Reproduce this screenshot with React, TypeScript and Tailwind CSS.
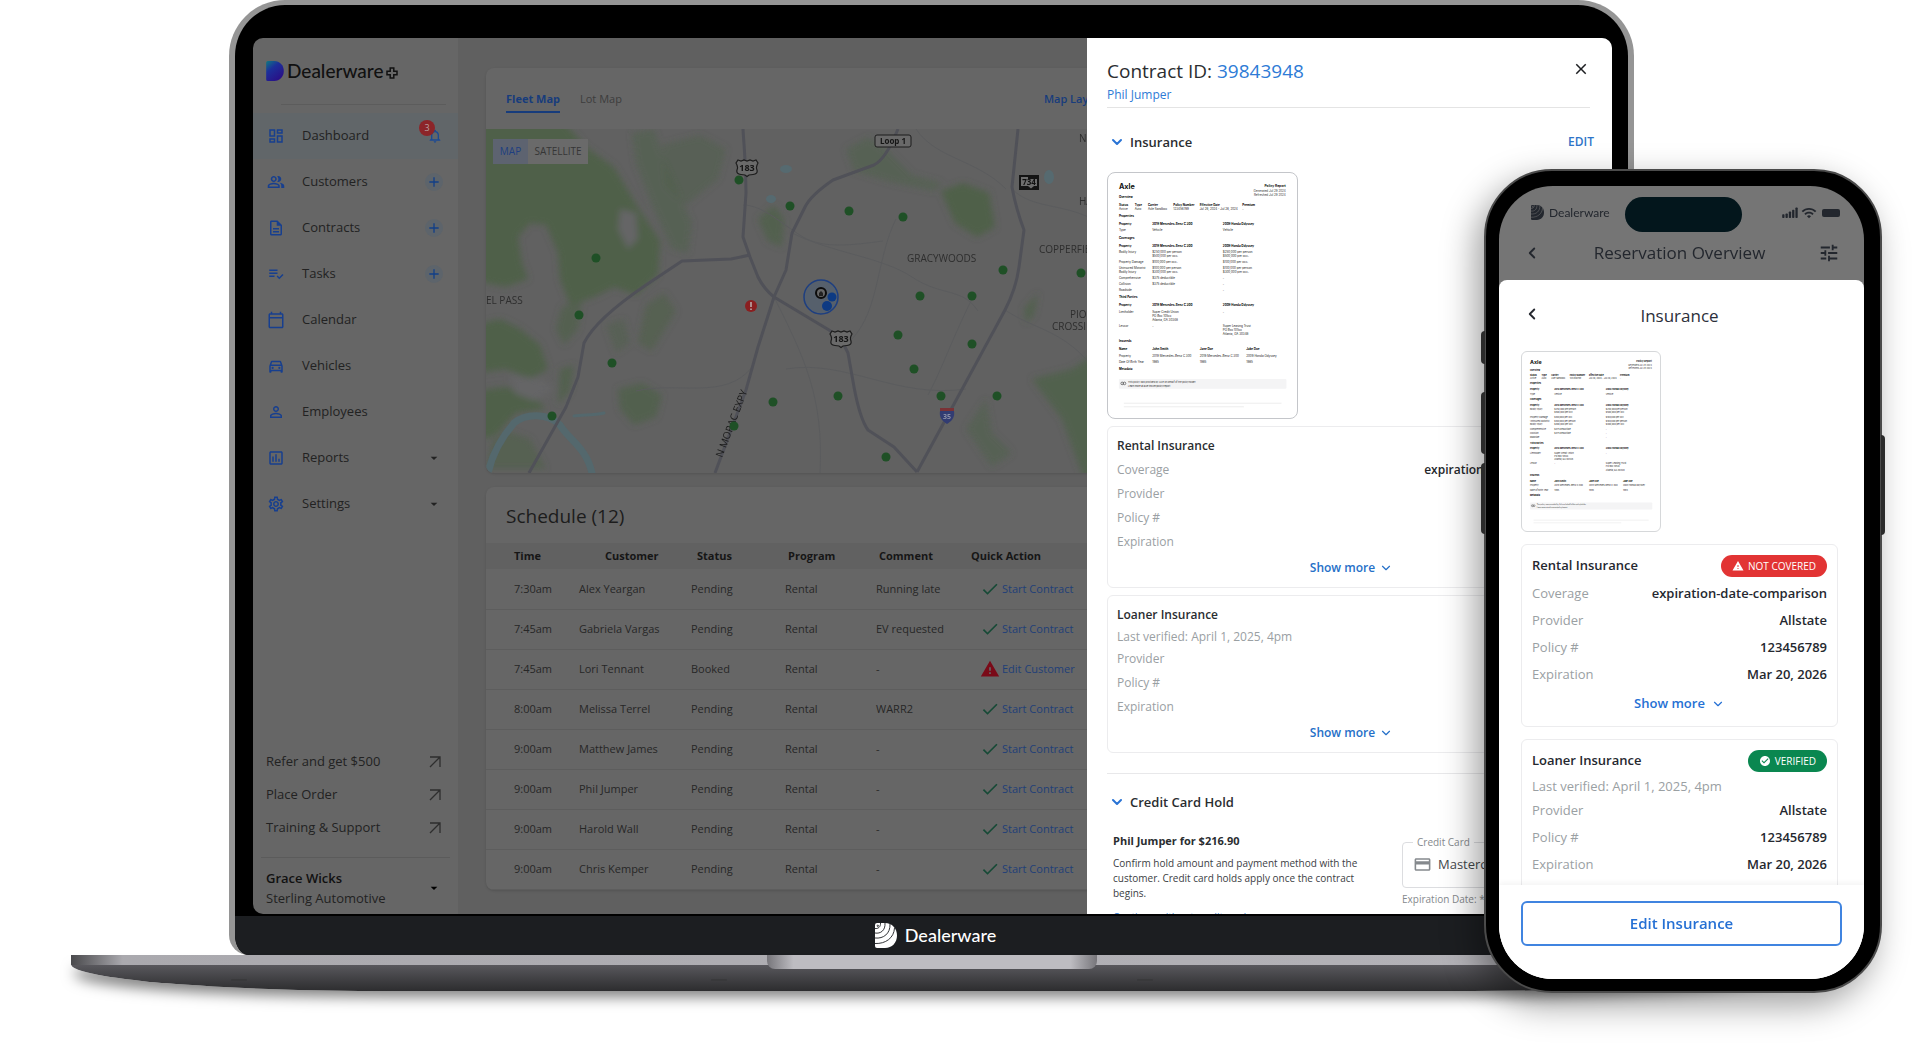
import type { ReactNode } from 'react';
import { ChevronDown, ChevronLeft } from 'lucide-react';
import {
    MdAdd,
    MdArrowDropDown,
    MdCheck,
    MdCheckCircle,
    MdClose,
    MdOutlineAssessment,
    MdOutlineCalendarToday,
    MdOutlineCreditCard,
    MdOutlineDashboard,
    MdOutlineDescription,
    MdOutlineDirectionsCar,
    MdOutlineNotifications,
    MdOutlinePeopleAlt,
    MdOutlineSettings,
    MdPersonOutline,
    MdPlaylistAddCheck,
    MdTune,
    MdWarning,
    MdWifi,
} from 'react-icons/md';

const navItems = [
    { label: 'Dashboard', icon: MdOutlineDashboard, action: 'bell' },
    { label: 'Customers', icon: MdOutlinePeopleAlt, action: 'add' },
    { label: 'Contracts', icon: MdOutlineDescription, action: 'add' },
    { label: 'Tasks', icon: MdPlaylistAddCheck, action: 'add' },
    { label: 'Calendar', icon: MdOutlineCalendarToday, action: '' },
    { label: 'Vehicles', icon: MdOutlineDirectionsCar, action: '' },
    { label: 'Employees', icon: MdPersonOutline, action: '' },
    { label: 'Reports', icon: MdOutlineAssessment, action: 'expand' },
    { label: 'Settings', icon: MdOutlineSettings, action: 'expand' },
];

const schedule = [
    { time: '7:30am', customer: 'Alex Yeargan', status: 'Pending', comment: 'Running late' },
    { time: '7:45am', customer: 'Gabriela Vargas', status: 'Pending', comment: 'EV requested' },
    { time: '7:45am', customer: 'Lori Tennant', status: 'Booked', comment: '-' },
    { time: '8:00am', customer: 'Melissa Terrel', status: 'Pending', comment: 'WARR2' },
    { time: '9:00am', customer: 'Matthew James', status: 'Pending', comment: '-' },
    { time: '9:00am', customer: 'Phil Jumper', status: 'Pending', comment: '-' },
    { time: '9:00am', customer: 'Harold Wall', status: 'Pending', comment: '-' },
    { time: '9:00am', customer: 'Chris Kemper', status: 'Pending', comment: '-' },
];

const vehiclePins = [
    [253, 51], [304, 77], [363, 82], [417, 88], [110, 129], [517, 141], [595, 144],
    [434, 167], [486, 167], [93, 186], [412, 206], [486, 215], [126, 234], [428, 240],
    [287, 273], [352, 267], [455, 267], [511, 267], [66, 287], [248, 297], [400, 328],
];

// x, baseline, text, bold
const reportLines: [number, number, string, boolean][] = [
    [33, 76, 'Overview', true],
    [33, 99, 'Status', true], [81, 99, 'Type', true], [121, 99, 'Carrier', true],
    [198, 99, 'Policy Number', true], [278, 99, 'Effective Date', true], [407, 99, 'Premium', true],
    [33, 111, 'Active', false], [81, 111, 'Auto', false], [121, 111, 'Axle Sandbox', false],
    [198, 111, '123456789', false], [278, 111, 'Jul 26, 2024 - Jul 26, 2024', false], [407, 111, '-', false],
    [33, 133, 'Properties', true],
    [33, 158, 'Property', true], [134, 158, '2019 Mercedes-Benz C 300', true], [348, 158, '2009 Honda Odyssey', true],
    [33, 176, 'Type', false], [134, 176, 'Vehicle', false], [348, 176, 'Vehicle', false],
    [33, 198, 'Coverages', true],
    [33, 222, 'Property', true], [134, 222, '2019 Mercedes-Benz C 300', true], [348, 222, '2009 Honda Odyssey', true],
    [33, 241, 'Bodily Injury', false], [134, 241, '$250,000 per person', false], [348, 241, '$250,000 per person', false],
    [134, 253, '$500,000 per occ.', false], [348, 253, '$500,000 per occ.', false],
    [33, 271, 'Property Damage', false], [134, 271, '$100,000 per occ.', false], [348, 271, '$100,000 per occ.', false],
    [33, 290, 'Uninsured Motorist', false], [134, 290, '$100,000 per person', false], [348, 290, '$100,000 per person', false],
    [33, 302, 'Bodily Injury', false], [134, 302, '$300,000 per occ.', false], [348, 302, '$300,000 per occ.', false],
    [33, 321, 'Comprehensive', false], [134, 321, '$375 deductible', false], [348, 321, '-', false],
    [33, 339, 'Collision', false], [134, 339, '$375 deductible', false], [348, 339, '-', false],
    [33, 357, 'Roadside', false], [348, 357, '-', false],
    [33, 379, 'Third Parties', true],
    [33, 403, 'Property', true], [134, 403, '2019 Mercedes-Benz C 300', true], [348, 403, '2009 Honda Odyssey', true],
    [33, 423, 'Lienholder', false], [134, 423, 'Super Credit Union', false], [348, 423, '-', false],
    [134, 435, 'PO Box 105xx', false], [134, 448, 'Atlanta, GA 30348', false],
    [33, 466, 'Lessor', false], [134, 466, '-', false], [348, 466, 'Super Leasing Trust', false],
    [348, 478, 'PO Box 105xx', false], [348, 491, 'Atlanta, GA 30348', false],
    [33, 513, 'Insureds', true],
    [33, 537, 'Name', true], [134, 537, 'John Smith', true], [278, 537, 'Jane Doe', true], [419, 537, 'Jake Doe', true],
    [33, 556, 'Property', false], [134, 556, '2019 Mercedes-Benz C 300', false],
    [278, 556, '2019 Mercedes-Benz C 300', false], [419, 556, '2009 Honda Odyssey', false],
    [33, 574, 'Date Of Birth Year', false], [134, 574, '1985', false], [278, 574, '1985', false], [419, 574, '1985', false],
    [33, 597, 'Metadata', true],
];

function BrandMark({ className, fill, line }: { className: string; fill: string; line?: string }) {
    return (
        <svg viewBox="0 0 22 25" className={className} aria-hidden="true">
            <defs>
                <linearGradient id="brand" x1="0" y1="0" x2="0.7" y2="1">
                    <stop offset="0" stopColor="#0e7a80" />
                    <stop offset="0.4" stopColor="#1c2f9a" />
                    <stop offset="1" stopColor="#2a0e86" />
                </linearGradient>
            </defs>
            <path d="M2 0h8c7 0 12 5.500 12 12.500S17 25 10 25H2a2 2 0 0 1-2-2V2a2 2 0 0 1 2-2z" fill={fill} />
            {line && (
                <g fill="none" stroke={line} strokeWidth="0.900">
                    <path d="M0 5.500c3 .5 5.800-1.500 5.500-5.500" />
                    <path d="M0 10c5.500 1 10.500-2.500 10-10" />
                    <path d="M0 15c8.500 1 15.500-4.500 15-14" />
                    <path d="M0 20.500c10.500.5 19-5.500 19.500-15.500" />
                    <circle cx="2.800" cy="2.800" r="0.700" />
                </g>
            )}
        </svg>
    );
}

function PolicyReport({ className }: { className: string }) {
    return (
        <svg
            viewBox="0 0 573 741"
            className={className}
            role="img"
            aria-label="Policy report"
            fontFamily="Inter, sans-serif"
            fontSize="9"
            fill="#333"
        >
            <text x="33" y="49" fontSize="22" fontWeight="700" fill="#111">Axle</text>
            <text x="539" y="42" fontSize="10" fontWeight="700" fill="#111" textAnchor="end">Policy Report</text>
            <text x="539" y="57" textAnchor="end">Generated Jul 29 2024</text>
            <text x="539" y="69" textAnchor="end">Refreshed Jul 29 2024</text>
            {reportLines.map(([x, y, text, bold]) => (
                <text key={`${x}-${y}`} x={x} y={y} fontWeight={bold ? 700 : 400} fill={bold ? '#000' : '#222'}>
                    {text}
                </text>
            ))}
            <rect x="33" y="624" width="508" height="29" rx="3" fill="#f4f4f5" />
            <g fill="none" stroke="#444" strokeWidth="2">
                <circle cx="43" cy="637" r="4" />
                <circle cx="50" cy="637" r="4" />
            </g>
            <text x="61" y="636" fontSize="7">This policy was provided by Axle on behalf of the policyholder</text>
            <text x="61" y="648" fontSize="7" fill="#222">Learn more at axle.insure/policy/report</text>
            <path d="M48 697h478M48 708h364" stroke="#ededed" strokeWidth="3" />
        </svg>
    );
}

function Sidebar() {
    return (
        <aside className="flex w-[205px] shrink-0 flex-col bg-[#666] text-[13px] text-[#222]">
            <div className="flex h-[66px] items-center gap-[3px] pl-[13px]">
                <BrandMark className="h-5 w-[18px]" fill="url(#brand)" />
                <span className="font-[Lato] text-[19px] leading-6 font-medium text-[#111]">Dealerware</span>
                <svg viewBox="0 0 12 12" className="mt-1 size-3" aria-hidden="true">
                    <path
                        d="M4.200 1h3.600v3.200H11v3.600H7.800V11H4.200V7.800H1V4.200h3.200z"
                        fill="none"
                        stroke="#111"
                        strokeWidth="1.500"
                    />
                </svg>
            </div>
            <div className="mr-3 mb-2 ml-7 h-px shrink-0 bg-[#5c5c5c]" />
            <nav>
                {navItems.map(({ label, icon: Icon, action }, index) => (
                    <div
                        key={label}
                        className={`flex h-[46px] items-center pr-3 pl-[14px] ${index === 0 ? 'bg-[#616669]' : ''}`}
                    >
                        <a href="#" className="flex flex-1 items-center gap-[17px]">
                            <Icon className="size-[18px] text-[#173f8f]" />
                            {label}
                        </a>
                        {action === 'bell' && (
                            <button className="relative mr-[3px]" aria-label="Notifications">
                                <MdOutlineNotifications className="size-4 text-[#1b4a94]" />
                                <span className="absolute -top-2 -left-2 flex size-4 items-center justify-center rounded-full bg-[#8c2529] text-[9px] text-[#b9a0a0]">
                                    3
                                </span>
                            </button>
                        )}
                        {action === 'add' && (
                            <button
                                className="mr-[3px] flex size-[18px] items-center justify-center rounded-full bg-[#5d646b]"
                                aria-label={`Add ${label}`}
                            >
                                <MdAdd className="size-4 text-[#123f88]" />
                            </button>
                        )}
                        {action === 'expand' && (
                            <button className="mr-1" aria-label={`Expand ${label}`}>
                                <MdArrowDropDown className="size-4" />
                            </button>
                        )}
                    </div>
                ))}
            </nav>
            <div className="mt-auto">
                {['Refer and get $500', 'Place Order', 'Training & Support'].map((label) => (
                    <a key={label} href="#" className="flex h-[33px] items-center justify-between pr-[17px] pl-[13px]">
                        {label}
                        <svg viewBox="0 0 12 12" className="size-3" fill="none" stroke="#2e2e2e" aria-hidden="true">
                            <path d="M1 1h10v10M11 1L1 11" strokeWidth="1.300" />
                        </svg>
                    </a>
                ))}
            </div>
            <div className="mx-2 mt-3 h-px shrink-0 bg-[#5b5b5b]" />
            <button className="mt-2.5 mb-1.5 flex items-center justify-between pr-4 pl-[13px] text-left leading-5">
                <span>
                    <span className="block font-semibold text-[#111]">Grace Wicks</span>
                    Sterling Automotive
                </span>
                <MdArrowDropDown className="size-4 text-black" />
            </button>
        </aside>
    );
}

function UsShield({ x, y }: { x: number; y: number }) {
    return (
        <g transform={`translate(${x} ${y})`}>
            <path
                d="M-9-8L-6-7-3-8 0-7 3-8 6-7 9-8 11-5Q8.500-1 10 2 11 6 6 6.500L2 7 0 8.500-2 7-6 6.500Q-11 6-10 2-8.500-1-11-5z"
                fill="#6a6a6a"
                stroke="#1c1c1c"
                strokeWidth="1.200"
            />
            <text y="3" fontSize="9" fontWeight="700" fill="#151515" textAnchor="middle">183</text>
        </g>
    );
}

function FleetMap() {
    return (
        <svg className="block h-[344px] w-full bg-[#616161]" role="img" aria-label="Fleet map">
            <defs>
                <filter id="soft">
                    <feGaussianBlur stdDeviation="3" />
                </filter>
            </defs>
            <g filter="url(#soft)">
                <g fill="#4f604a">
                    <path d="M-10-10H75L100 18 128 38 148 72 174 112 172 146 150 166 128 158 108 168 84 176 74 150 72 124 60 96 44 94 32 108 36 134 42 150 20 158-10 152z" />
                    <path d="M-10 196L14 190 34 200 54 216 62 240 44 250 20 240-10 244z" />
                    <path d="M-10 262L20 258 46 266 60 280 30 284 10 306-10 312z" />
                    <path d="M76 178L96 172 92 200 78 216 70 200z" opacity="0.700" />
                    <path d="M74 240L88 236 84 262 72 276z" opacity="0.800" />
                    <path d="M455 62L477 54 503 64 509 98 491 108 469 94z" />
                    <path d="M146 4L168 0 180 36 206 94 202 124 186 120 166 76 150 34z" opacity="0.550" />
                    <path d="M176 16L214 6 240 20 232 50 200 76 180 56z" opacity="0.500" />
                    <path d="M272 90L288 76 298 90 296 118 282 112z" opacity="0.800" />
                    <path d="M360 20L382 8 402 22 426 46 456 54 448 62 408 54 368 42z" opacity="0.550" />
                    <path d="M132 260L156 254 176 266 170 288 148 296 134 280z" opacity="0.800" />
                    <path d="M586 240L616 220V350H598L576 290 546 250z" opacity="0.850" />
                    <path d="M480 300L500 270 506 304 526 324 506 338z" opacity="0.550" />
                    <path d="M538 180L552 164 548 186 540 194z" opacity="0.800" />
                    <path d="M6 312L22 302 44 310 60 340H0z" opacity="0.600" />
                    <path d="M160 176L178 164 190 182 166 222 152 214z" opacity="0.600" />
                    <path d="M120 196L138 190 144 214 130 224z" opacity="0.500" />
                </g>
                <g fill="#656566">
                    <path d="M134 80L150 84 152 110 142 120 132 100z" />
                    <path d="M24 246L54 250 68 260 48 272 28 264z" />
                </g>
            </g>
            <g fill="none" stroke="#54686d" strokeLinecap="round" strokeLinejoin="round">
                <path d="M2 344c4-18 14-36 26-50 12-10 34-10 46 2 8 14 26 22 32 48" strokeWidth="7" />
                <path d="M88 287c8-2 18 0 30-3" strokeWidth="3" />
            </g>
            <g fill="#566a70">
                <ellipse cx="300" cy="40" rx="6" ry="4" />
                <ellipse cx="285" cy="70" rx="5" ry="4" />
                <ellipse cx="563" cy="48" rx="5" ry="7" />
            </g>
            <g fill="none" stroke="#5b5c5e" strokeWidth="1">
                <path d="M257 76c20 0 40 20 60 32s50 8 80 4M306 104c40 20 90 24 120 44s50 10 66 34M410 90c-20 40-16 90-44 120M486 170c-20 40-30 70-44 96" />
                <path d="M526 60c20 20 50 14 80 30M430 0c20 30 60 30 90 60M150 262c40-10 90 10 116-24M288 168c30 60 50 100 46 176M300 240c60-10 110 30 180 20M519 181c30 20 60 20 90 60" />
            </g>
            <g fill="none" stroke="#505158" strokeWidth="3" strokeLinejoin="round">
                <path d="M257 0C258 20 260 30 260 64L257 108 264 128 272 148Q278 160 288 168L343 201 355 210 362 224 368 258Q374 290 382 301L408 318 431 343" />
                <path d="M412 0Q400 30 388 36L347 51Q325 66 319 78L306 104 300 141 288 168 272 218 260 261 229 344" />
                <path d="M264 126L245 130 196 132 160 156Q110 190 98 214L92 248 80 278 43 344" />
                <path d="M532 0L526 58Q530 80 538 101L533 138Q530 160 519 181L474 264 431 343" />
            </g>
            <g fontSize="10" fill="#2e2e2e">
                <text x="0" y="175">EL PASS</text>
                <text x="421" y="133">GRACYWOODS</text>
                <text x="553" y="124">COPPERFIELD</text>
                <text x="584" y="189">PIONEER</text>
                <text x="566" y="201">CROSSING</text>
                <text x="593" y="13">NORTH</text>
                <text x="593" y="76">HARRIS</text>
                <text transform="translate(236 329) rotate(-69)" fill="#1a1a1a">N MOPAC EXPY</text>
            </g>
            <UsShield x={261} y={39} />
            <UsShield x={355} y={210} />
            <rect x="389" y="6" width="36" height="12" rx="2" fill="#696969" stroke="#1c1c1c" />
            <text x="407" y="15" fontSize="8" fontWeight="700" fill="#151515" textAnchor="middle">Loop 1</text>
            <rect x="533" y="46" width="20" height="15" fill="#141414" />
            <path d="M535 48h7v2h9v7h-3l-3 2.500-3-2.500h-7z" fill="#6e6e6e" />
            <text x="543" y="56" fontSize="8" fontWeight="700" fill="#111" textAnchor="middle">734</text>
            <path d="M454 282h14c1 6-2 10-7 13-5-3-8-7-7-13z" fill="#323c72" />
            <path d="M454 279h14v3h-14z" fill="#7a3236" />
            <text x="461" y="290" fontSize="7" fontWeight="700" fill="#8c90a8" textAnchor="middle">35</text>
            {vehiclePins.map(([x, y]) => (
                <circle key={`${x}-${y}`} cx={x} cy={y} r="4.500" fill="#1f5026" />
            ))}
            <circle cx="265" cy="177" r="6" fill="#8a1f20" />
            <path d="M265 173v5M265 179.500v1.500" stroke="#b9a9a9" strokeWidth="1.600" />
            <circle cx="335" cy="168" r="17" fill="#56606c" stroke="#1e3f80" strokeWidth="1.500" />
            <circle cx="335" cy="164" r="5" fill="#666" stroke="#0c0c0c" strokeWidth="2" />
            <path d="M333 167v-3l2-2 2 2v3z" fill="#222" />
            <circle cx="346" cy="168" r="4.500" fill="#0d3a83" />
            <circle cx="341" cy="177" r="5" fill="#0d3a83" />
        </svg>
    );
}

function Dashboard() {
    return (
        <main className="min-w-0 flex-1 bg-[#606060] px-7 pt-[30px] pb-6 text-[11px] text-[#262626]">
            <section className="overflow-hidden rounded-lg bg-[#666] shadow-sm">
                <div className="flex h-[61px] items-center gap-5 pl-5">
                    <button className="border-b-2 border-[#173c7c] pt-1 pb-px leading-[22px] font-bold text-[#173c7c]">
                        Fleet Map
                    </button>
                    <button className="border-b-2 border-transparent pt-1 pb-px leading-[22px] text-[#3d3d3d]">
                        Lot Map
                    </button>
                    <button className="ml-[402px] leading-[22px] font-semibold text-[#173c7c]">Map Layers</button>
                </div>
                <div className="relative">
                    <FleetMap />
                    <div className="absolute top-2.5 left-[7px] flex bg-[#6a6a6a] text-[10px] leading-[25px]">
                        <button className="w-[35px] bg-[#5d6370] text-[#1e3f80]">MAP</button>
                        <button className="w-[60px] text-[#363636]">SATELLITE</button>
                    </div>
                </div>
            </section>
            <section className="mt-[14px] overflow-hidden rounded-lg bg-[#666] shadow-sm">
                <h2 className="pt-[15px] pb-[13px] pl-5 text-[19px] leading-7 text-[#1c1c1c]">Schedule (12)</h2>
                <table className="w-full table-fixed border-collapse text-left">
                    <colgroup>
                        <col className="w-[93px]" />
                        <col className="w-[112px]" />
                        <col className="w-[94px]" />
                        <col className="w-[91px]" />
                        <col className="w-[95px]" />
                        <col />
                    </colgroup>
                    <thead>
                        <tr className="h-[26px] bg-[#616161] text-[#161616]">
                            <th className="pl-7">Time</th>
                            <th className="pl-[26px]">Customer</th>
                            <th className="pl-1.5">Status</th>
                            <th className="pl-[3px]">Program</th>
                            <th className="pl-[3px]">Comment</th>
                            <th>Quick Action</th>
                        </tr>
                    </thead>
                    <tbody>
                        {schedule.map((row) => (
                            <tr key={row.customer} className="h-10 border-b border-[#5d5d5d]">
                                <td className="pl-7">{row.time}</td>
                                <td>{row.customer}</td>
                                <td>{row.status}</td>
                                <td>Rental</td>
                                <td>{row.comment}</td>
                                <td className="pl-[9px]">
                                    <a href="#" className="flex items-center gap-0.5 text-[#1f3f78]">
                                        {row.status === 'Booked' ? (
                                            <MdWarning className="size-5 text-[#7a0a18]" />
                                        ) : (
                                            <MdCheck className="size-5 text-[#164a36]" />
                                        )}
                                        {row.status === 'Booked' ? 'Edit Customer' : 'Start Contract'}
                                    </a>
                                </td>
                            </tr>
                        ))}
                    </tbody>
                </table>
            </section>
        </main>
    );
}

function DrawerRow({ label, value }: { label: string; value?: string }) {
    return (
        <div className="flex justify-between leading-6">
            <dt className="text-[#9aa0a3]">{label}</dt>
            <dd className="font-semibold text-[#25282c]">{value}</dd>
        </div>
    );
}

function DrawerHeading({ children }: { children: ReactNode }) {
    return (
        <h3 className="flex items-center gap-[5px] text-[13px] leading-5 font-semibold text-[#2a2d30]">
            <ChevronDown className="ml-0.5 size-4 text-[#2a74d5]" strokeWidth={3} />
            {children}
        </h3>
    );
}

function DrawerShowMore() {
    return (
        <button className="mx-auto mt-0.5 flex items-center gap-1 leading-6 font-semibold text-[#2570c8]">
            Show more
            <ChevronDown className="size-[14px]" />
        </button>
    );
}

function ContractDrawer() {
    return (
        <aside className="absolute inset-y-0 right-0 w-[525px] overflow-hidden bg-white pt-[19px] pr-4 pl-5 text-xs text-[#2a2d30]">
            <div className="mr-1.5 flex items-start justify-between border-b border-[#e4e4e4] pb-[2px]">
                <div>
                    <h2 className="text-[19px] leading-7">
                        Contract ID: <a href="#" className="text-[#2e7bd6]">39843948</a>
                    </h2>
                    <a href="#" className="block leading-5 text-[#2e7bd6]">Phil Jumper</a>
                </div>
                <button className="mt-[3px]" aria-label="Close">
                    <MdClose className="size-[18px] text-[#1d1f22]" />
                </button>
            </div>
            <div className="mt-6 mr-0.5 flex items-center justify-between">
                <DrawerHeading>Insurance</DrawerHeading>
                <button className="font-semibold text-[#2e74c8]">EDIT</button>
            </div>
            <div className="mt-5 w-[191px] rounded-lg border border-[#c4c6ca]">
                <PolicyReport className="block h-[245px] w-full" />
            </div>
            <section className="mt-[7px] rounded-md border border-[#ececee] px-[9px] pt-[9px] pb-[7px]">
                <h4 className="leading-5 font-semibold">Rental Insurance</h4>
                <dl className="mt-0.5">
                    <DrawerRow label="Coverage" value="expiration-date-comparison" />
                    <DrawerRow label="Provider" />
                    <DrawerRow label="Policy #" />
                    <DrawerRow label="Expiration" />
                </dl>
                <DrawerShowMore />
            </section>
            <section className="mt-[7px] rounded-md border border-[#ececee] px-[9px] pt-[9px] pb-[7px]">
                <h4 className="leading-5 font-semibold">Loaner Insurance</h4>
                <p className="mt-0.5 leading-5 text-[#9aa0a3]">Last verified: April 1, 2025, 4pm</p>
                <dl>
                    <DrawerRow label="Provider" />
                    <DrawerRow label="Policy #" />
                    <DrawerRow label="Expiration" />
                </dl>
                <DrawerShowMore />
            </section>
            <div className="mt-5 mb-[18px] h-px bg-[#e8e8ea]" />
            <DrawerHeading>Credit Card Hold</DrawerHeading>
            <div className="mt-[19px] flex items-start justify-between pl-1.5">
                <div className="w-[260px]">
                    <h4 className="text-[11px] leading-5 font-bold">Phil Jumper for $216.90</h4>
                    <p className="mt-[5px] text-[10px] leading-[15px] text-[#3c4044]">
                        Confirm hold amount and payment method with the customer. Credit card holds apply once the
                        contract begins.
                    </p>
                    <a href="#" className="mt-[9px] block text-[10px] leading-[15px] text-[#2e7bd6]">
                        Continue without credit card
                    </a>
                </div>
                <div className="mt-1 w-[194px] text-[10px] text-[#85898d]">
                    <fieldset className="h-[53px] rounded border border-[#dcdde0] px-2.5">
                        <legend className="px-1 leading-[15px]">Credit Card</legend>
                        <div className="flex items-center gap-1.5 pt-1 text-[13px] leading-5 text-[#44484c]">
                            <MdOutlineCreditCard className="size-[19px] text-[#85898d]" />
                            Mastercard
                        </div>
                    </fieldset>
                    <p className="mt-1 leading-[15px]">Expiration Date: **/**</p>
                </div>
            </div>
        </aside>
    );
}

function Laptop() {
    return (
        <div>
            <div className="mr-[286px] ml-[229px] overflow-hidden rounded-t-[56px] rounded-b-[20px] border-x-[6px] border-t-[5px] border-[#959595] bg-black">
                <div className="pt-[33px] pr-4 pl-[18px]">
                    <div className="relative flex overflow-hidden rounded-[10px] rounded-br-none">
                        <Sidebar />
                        <Dashboard />
                        <ContractDrawer />
                    </div>
                </div>
                <div className="mt-[2px] flex h-[39px] items-center justify-center gap-2 bg-[#1c1e21] pl-2 text-white">
                    <BrandMark className="h-[25px] w-[22px]" fill="#fff" line="#1c1e21" />
                    <span className="font-[Lato] text-lg leading-6 font-medium">Dealerware</span>
                </div>
            </div>
            <div className="relative mr-32 ml-[71px] h-9 overflow-hidden bg-linear-to-b from-[#6b6a70] to-[#2d2d2f] shadow-[0_10px_14px_-4px_rgba(0,0,0,0.5)] [border-radius:0_0_320px_320px/0_0_27px_27px]">
                <div className="h-2.5 bg-linear-to-r from-[#4a4a4d] via-[#aaa9ae] via-3% to-[#b5b4b9]" />
                <div className="absolute top-0 left-1/2 h-3.5 w-[330px] -translate-x-1/2 rounded-b-lg bg-[linear-gradient(to_right,#77767b,#bdbcc1_8%,#bdbcc1_92%,#77767b)]" />
                <div className="absolute top-6 left-40 h-0.5 w-4 rounded-full bg-[#39393b]" />
                <div className="absolute top-6 left-[640px] h-0.5 w-4 rounded-full bg-[#39393b]" />
                <div className="absolute top-6 left-[1066px] h-0.5 w-4 rounded-full bg-[#39393b]" />
            </div>
        </div>
    );
}

function PhoneRow({ label, value }: { label: string; value: string }) {
    return (
        <div className="flex justify-between leading-[27px]">
            <dt className="text-[#9aa0a3]">{label}</dt>
            <dd className="font-semibold text-[#25282f]">{value}</dd>
        </div>
    );
}

function SignalIcon() {
    return (
        <svg viewBox="0 0 17 12" className="h-[11px] w-4" fill="#23272e" aria-hidden="true">
            <rect x="0" y="8" width="2.500" height="4" rx="0.800" />
            <rect x="3.600" y="7" width="2.500" height="5" rx="0.800" />
            <rect x="7.200" y="5" width="2.500" height="7" rx="0.800" />
            <rect x="10.800" y="3" width="2.500" height="9" rx="0.800" />
            <rect x="14.400" y="0.500" width="2.500" height="11.500" rx="0.800" />
        </svg>
    );
}

function Phone() {
    return (
        <div className="absolute top-[169px] right-[38px] w-[398px]">
            <div className="absolute top-[162px] -left-[3px] h-[33px] w-1 rounded-l-sm bg-[#2b2b2b]" />
            <div className="absolute top-[223px] -left-[3px] h-[62px] w-1 rounded-l-sm bg-[#2b2b2b]" />
            <div className="absolute top-[294px] -left-[3px] h-[71px] w-1 rounded-l-sm bg-[#2b2b2b]" />
            <div className="absolute top-[266px] -right-[3px] h-[100px] w-1 rounded-r-sm bg-[#2b2b2b]" />
            <div className="rounded-[68px] border-2 border-[#4b4b4b] bg-black pt-[15px] pr-4 pb-3 pl-[13px] shadow-[-8px_12px_34px_rgba(0,0,0,0.38)]">
                <div className="overflow-hidden rounded-[54px] bg-[#757575] text-[13px]">
                    <div className="flex h-[94px] flex-col px-8 pt-[11px] text-[#23272e]">
                        <div className="flex items-center">
                            <div className="flex w-[94px] items-center gap-[5px] pb-1">
                                <BrandMark className="h-[15px] w-[13px]" fill="#23272e" line="#757575" />
                                <span className="font-[Lato] text-xs leading-4">Dealerware</span>
                            </div>
                            <div className="h-[35px] w-[117px] rounded-full bg-[#03161c]" />
                            <div className="-mr-2 ml-auto flex items-center gap-[3px] pb-1">
                                <SignalIcon />
                                <MdWifi className="size-4" />
                                <div className="ml-0.5 h-2 w-[18px] rounded-xs bg-[#23272e]" />
                            </div>
                        </div>
                        <div className="mt-[7px] -ml-2 flex items-center justify-between">
                            <button aria-label="Back">
                                <ChevronLeft className="size-[18px]" strokeWidth={2.5} />
                            </button>
                            <h2 className="text-[17px] leading-7 font-medium">Reservation Overview</h2>
                            <button className="-mr-2" aria-label="Filters">
                                <MdTune className="size-[22px]" />
                            </button>
                        </div>
                    </div>
                    <div className="rounded-t-lg bg-white">
                        <div className="flex items-center justify-between px-6 pt-[22px]">
                            <button className="pb-1" aria-label="Back">
                                <ChevronLeft className="size-[18px] text-[#25282f]" strokeWidth={2.5} />
                            </button>
                            <h2 className="text-[17px] leading-7 font-medium text-[#2b2f3a]">Insurance</h2>
                            <div className="w-[22px]" />
                        </div>
                        <div className="h-[555px] overflow-hidden pt-[21px] pr-[26px] pl-[22px]">
                            <div className="w-[140px] rounded-md border border-[#d6d8da]">
                                <PolicyReport className="block h-[179px] w-full" />
                            </div>
                            <section className="mt-3 rounded-md border border-[#ececee] px-2.5 pt-2.5 pb-2">
                                <div className="flex h-[22px] items-center justify-between">
                                    <h3 className="font-semibold text-[#25282f]">Rental Insurance</h3>
                                    <span className="flex h-[22px] items-center gap-1 rounded-full bg-[#e23434] px-[11px] text-[10px] font-medium text-white">
                                        <MdWarning className="size-3" />
                                        NOT COVERED
                                    </span>
                                </div>
                                <dl className="mt-[3px]">
                                    <PhoneRow label="Coverage" value="expiration-date-comparison" />
                                    <PhoneRow label="Provider" value="Allstate" />
                                    <PhoneRow label="Policy #" value="123456789" />
                                    <PhoneRow label="Expiration" value="Mar 20, 2026" />
                                </dl>
                                <button className="mx-auto mt-0.5 mb-px flex items-center gap-1.5 leading-[27px] font-semibold text-[#2570d4]">
                                    Show more
                                    <ChevronDown className="size-[14px]" />
                                </button>
                            </section>
                            <section className="mt-3 rounded-md border border-[#ececee] px-2.5 pt-2.5 pb-8">
                                <div className="flex h-[22px] items-center justify-between">
                                    <h3 className="font-semibold text-[#25282f]">Loaner Insurance</h3>
                                    <span className="flex h-[22px] items-center gap-1 rounded-full bg-[#0a8750] px-[11px] text-[10px] font-medium text-white">
                                        <MdCheckCircle className="size-3" />
                                        VERIFIED
                                    </span>
                                </div>
                                <p className="mt-[3px] leading-[22px] text-[#9aa0a3]">Last verified: April 1, 2025, 4pm</p>
                                <dl>
                                    <PhoneRow label="Provider" value="Allstate" />
                                    <PhoneRow label="Policy #" value="123456789" />
                                    <PhoneRow label="Expiration" value="Mar 20, 2026" />
                                </dl>
                            </section>
                        </div>
                        <div className="relative bg-white px-[22px] pt-4 pb-[33px] shadow-[0_-2px_6px_rgba(0,0,0,0.05)]">
                            <button className="h-[45px] w-full rounded-md border-2 border-[#4084e0] text-[15px] font-semibold text-[#2570d4]">
                                Edit Insurance
                            </button>
                        </div>
                    </div>
                </div>
            </div>
        </div>
    );
}

export default function App() {
    return (
        <div className="relative min-h-screen overflow-hidden bg-white font-['Open_Sans',sans-serif]">
            <Laptop />
            <Phone />
        </div>
    );
}
